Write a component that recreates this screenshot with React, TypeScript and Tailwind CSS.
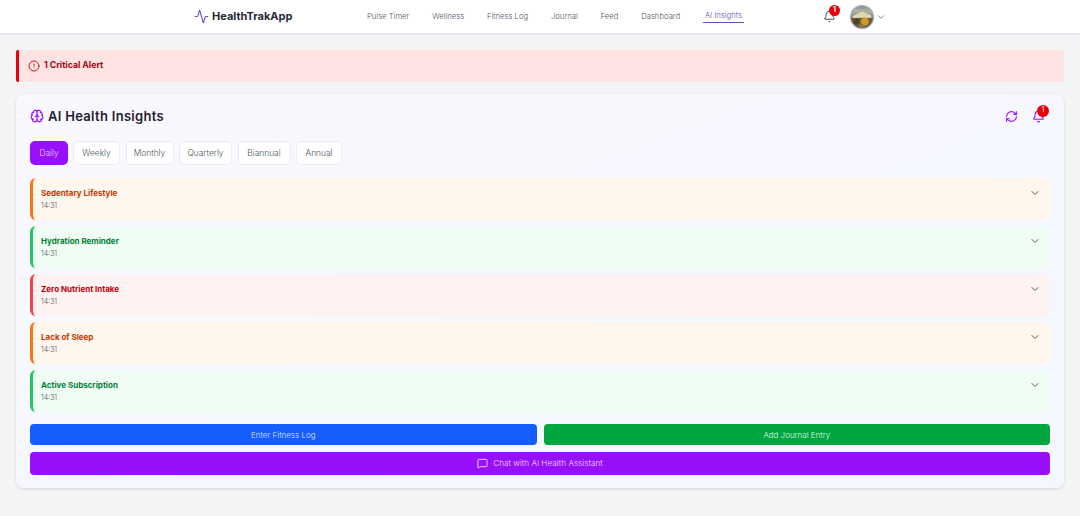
import { AlertCircle, Activity, Bell, Brain, ChevronDown, MessageSquare, RefreshCw } from "lucide-react";

const navLinks = ["Pulse Timer", "Wellness", "Fitness Log", "Journal", "Feed", "Dashboard"];
const tabs = [
  { label: "Weekly", width: "w-[47px]" },
  { label: "Monthly", width: "w-[48px]" },
  { label: "Quarterly", width: "w-[53px]" },
  { label: "Biannual", width: "w-[53px]" },
  { label: "Annual", width: "w-[46px]" },
];

const insights = [
  { title: "Sedentary Lifestyle", box: "bg-[#fff7ed] border-[#f97316]", text: "text-[#ca3500]" },
  { title: "Hydration Reminder", box: "bg-[#f0fdf4] border-[#22c55e]", text: "text-[#008236]" },
  { title: "Zero Nutrient Intake", box: "bg-[#fef2f2] border-[#ef4444]", text: "text-[#c10007]" },
  { title: "Lack of Sleep", box: "bg-[#fff7ed] border-[#f97316]", text: "text-[#ca3500]" },
  { title: "Active Subscription", box: "bg-[#f0fdf4] border-[#22c55e]", text: "text-[#008236]" },
];

function Avatar() {
  return (
    <svg viewBox="0 0 24 24" className="h-[22px] w-[22px] rounded-full ring-1 ring-[#9d97d6]">
      <rect width="24" height="24" fill="#8f9a8c" />
      <rect y="3" width="24" height="5" fill="#a8b0a0" />
      <path d="M2 11 L12 6 L22 10 L22 13 L2 14 Z" fill="#e0d6ac" />
      <rect y="13" width="24" height="11" fill="#6b5a30" />
      <circle cx="15" cy="17" r="4.5" fill="#c79a2a" />
      <circle cx="6" cy="17" r="3" fill="#4a4226" />
      <rect x="9" y="20" width="5" height="4" fill="#8c7a3c" />
    </svg>
  );
}

export default function App() {
  return (
    <div className="h-[516px] overflow-hidden bg-[#f3f4f6] font-['Inter',sans-serif]">
      <header className="flex h-[35px] items-center border-b-2 border-[#e8e9ec] bg-white pl-[194px]">
        <div className="flex w-[173px] items-center gap-[3px]">
          <Activity size={15} strokeWidth={1.75} className="text-[#5b50c8]" />
          <span className="text-[11px] font-bold text-[#1f2937]">HealthTrakApp</span>
        </div>
        <nav className="flex items-center gap-[22.8px] text-[7.7px] font-light text-[#4b5563]">
          {navLinks.map((link) => (
            <span key={link}>{link}</span>
          ))}
          <span className="border-b border-[#5b50c8] px-[2px] pb-[1px] text-[#5b50c8]">AI Insights</span>
        </nav>
        <div className="relative ml-[79px]">
          <Bell size={13} strokeWidth={1.75} className="text-[#374151]" />
          <span className="absolute -top-[5px] left-[6px] flex h-[11px] w-[11px] items-center justify-center rounded-full bg-[#e7000b] text-[7px] font-bold text-white">
            1
          </span>
        </div>
        <div className="ml-[15px] flex">
          <Avatar />
        </div>
        <ChevronDown size={10} className="ml-[3px] text-[#6b7280]" />
      </header>

      <main className="flex flex-col gap-3 px-4 pt-[15px]">
        <div className="flex h-8 items-center gap-[4px] rounded-[2px] border-l-[3px] border-[#e7000b] bg-[#ffe2e2] pl-[9px]">
          <AlertCircle size={12} className="text-[#b91c1c]" />
          <span className="text-[8.7px] font-bold text-[#9f0712]">1 Critical Alert</span>
        </div>

        <section className="flex h-[394px] flex-col rounded-lg bg-gradient-to-br from-[#faf8ff] to-[#f3f7fe] px-[14px] pt-[11px] shadow-[0_1px_3px_rgba(0,0,0,0.12)]">
          <div className="flex h-[22px] items-center">
            <Brain size={14} strokeWidth={2} className="text-[#9810fa]" />
            <h1 className="ml-1 mt-[1px] text-[13px] font-semibold tracking-[0.3px] text-[#1e2030]">AI Health Insights</h1>
            <RefreshCw size={13} strokeWidth={2} className="ml-auto text-[#9810fa]" />
            <div className="relative ml-[14px] mr-[5px]">
              <Bell size={13} strokeWidth={2} className="text-[#9810fa]" />
              <span className="absolute -top-[5px] left-[5px] flex h-[12px] w-[12px] items-center justify-center rounded-full bg-[#e7000b] text-[7px] text-white">
                1
              </span>
            </div>
          </div>

          <div className="mt-[14px] flex h-6 gap-[5.5px] text-[8.4px] font-light">
            <button className="mr-[-0.5px] w-[38px] rounded-[5px] bg-[#9810fa] text-[#e9d5ff]">Daily</button>
            {tabs.map((tab) => (
              <button key={tab.label} className={`rounded-[5px] border border-[#eceaf4] bg-white text-[#4b5563] ${tab.width}`}>
                {tab.label}
              </button>
            ))}
          </div>

          <div className="mt-[13px] flex flex-col gap-[6px]">
            {insights.map((item) => (
              <div key={item.title} className={`flex h-[42px] items-center justify-between rounded-[6px] border-l-[3px] pl-[8px] pr-[9px] ${item.box}`}>
                <div>
                  <div className={`text-[8px] font-bold leading-[12px] ${item.text}`}>{item.title}</div>
                  <div className="mt-[1px] text-[7px] font-light leading-[11px] text-[#4b5563]">14:31</div>
                </div>
                <ChevronDown size={12} className="mb-[12px] text-[#4b5563]" />
              </div>
            ))}
          </div>

          <div className="mt-[12px] grid grid-cols-2 gap-[7px] text-[8px] font-light text-[#dbeafe]">
            <button className="h-[21px] rounded-[4px] bg-[#155dfc]">Enter Fitness Log</button>
            <button className="h-[21px] rounded-[4px] bg-[#00a63e] text-[#dcfce7]">Add Journal Entry</button>
          </div>
          <button className="mt-[7px] flex h-[23px] items-center justify-center gap-[5px] rounded-[4px] bg-[#9810fa] text-[8.2px] font-light text-[#f3d9ff]">
            <MessageSquare size={11} />
            Chat with AI Health Assistant
          </button>
        </section>
      </main>
    </div>
  );
}
